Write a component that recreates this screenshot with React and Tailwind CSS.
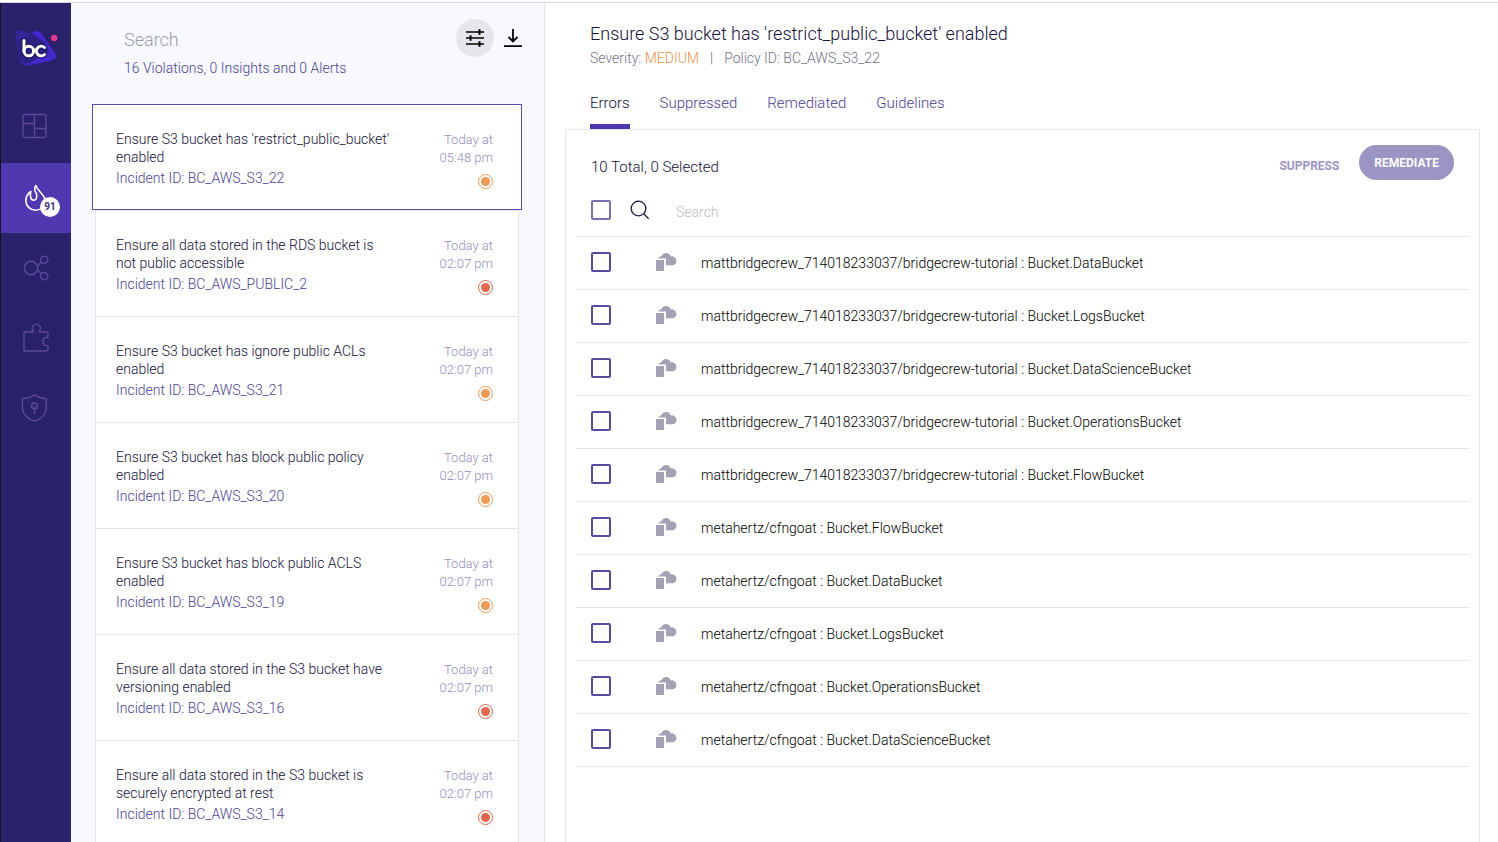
import React, { useState } from 'react'

const incidents = [
  { title: "Ensure S3 bucket has 'restrict_public_bucket' enabled", id: 'BC_AWS_S3_22', time: '05:48 pm', severity: 'medium' },
  { title: 'Ensure all data stored in the RDS bucket is not public accessible', id: 'BC_AWS_PUBLIC_2', time: '02:07 pm', severity: 'high' },
  { title: 'Ensure S3 bucket has ignore public ACLs enabled', id: 'BC_AWS_S3_21', time: '02:07 pm', severity: 'medium' },
  { title: 'Ensure S3 bucket has block public policy enabled', id: 'BC_AWS_S3_20', time: '02:07 pm', severity: 'medium' },
  { title: 'Ensure S3 bucket has block public ACLS enabled', id: 'BC_AWS_S3_19', time: '02:07 pm', severity: 'medium' },
  { title: 'Ensure all data stored in the S3 bucket have versioning enabled', id: 'BC_AWS_S3_16', time: '02:07 pm', severity: 'high' },
  { title: 'Ensure all data stored in the S3 bucket is securely encrypted at rest', id: 'BC_AWS_S3_14', time: '02:07 pm', severity: 'high' },
]

const resources = [
  'mattbridgecrew_714018233037/bridgecrew-tutorial : Bucket.DataBucket',
  'mattbridgecrew_714018233037/bridgecrew-tutorial : Bucket.LogsBucket',
  'mattbridgecrew_714018233037/bridgecrew-tutorial : Bucket.DataScienceBucket',
  'mattbridgecrew_714018233037/bridgecrew-tutorial : Bucket.OperationsBucket',
  'mattbridgecrew_714018233037/bridgecrew-tutorial : Bucket.FlowBucket',
  'metahertz/cfngoat : Bucket.FlowBucket',
  'metahertz/cfngoat : Bucket.DataBucket',
  'metahertz/cfngoat : Bucket.LogsBucket',
  'metahertz/cfngoat : Bucket.OperationsBucket',
  'metahertz/cfngoat : Bucket.DataScienceBucket',
]

const tabs = ['Errors', 'Suppressed', 'Remediated', 'Guidelines']

export default function App() {
  const [active, setActive] = useState('BC_AWS_S3_22')
  const [tab, setTab] = useState('Errors')
  const [selected, setSelected] = useState([])

  function toggle(name) {
    setSelected(selected.includes(name) ? selected.filter(n => n !== name) : [...selected, name])
  }

  function toggleAll() {
    setSelected(selected.length === resources.length ? [] : resources)
  }

  return (
    <div className="h-screen flex flex-col overflow-hidden bg-white font-['Roboto',sans-serif] font-light text-sm text-[#150f3a]">
      <div className="h-[3px] shrink-0 border-b border-[#d6d6df]"></div>
      <div className="flex flex-1 min-h-0">
        <Sidebar />

        <section className="w-[474px] shrink-0 flex flex-col bg-[#f8f9fe] border-r border-[#e6e6ee]">
          <div className="flex justify-between pl-[53px] pr-5 pt-4 h-[101px] shrink-0">
            <div>
              <input
                type="text"
                aria-label="Search incidents"
                placeholder="Search"
                className="block w-60 h-10 text-lg bg-transparent outline-none placeholder:text-[#9c9bb3]"
              />
              <p className="leading-[18px] text-[#4d3e96]">16 Violations, 0 Insights and 0 Alerts</p>
            </div>
            <div className="flex items-start gap-2">
              <button type="button" aria-label="Filters" className="w-[38px] h-[38px] rounded-full bg-[#e4e6eb] text-black flex items-center justify-center">
                <FilterIcon />
              </button>
              <button type="button" aria-label="Download" className="w-[22px] h-[38px] text-black flex items-center justify-center">
                <DownloadIcon />
              </button>
            </div>
          </div>
          <ul className="flex-1 min-h-0 overflow-hidden">
            {incidents.map(item => (
              <li key={item.id}>
                <Incident item={item} active={item.id === active} onClick={() => setActive(item.id)} />
              </li>
            ))}
          </ul>
        </section>

        <main className="flex-1 min-w-0 flex flex-col pl-5 pr-[18px] pt-[19px]">
          <header className="pl-[25px]">
            <h1 className="text-lg leading-6">Ensure S3 bucket has 'restrict_public_bucket' enabled</h1>
            <p className="flex leading-6 text-[#73718a]">
              <span>Severity: <span className="text-[#ee9148]">MEDIUM</span></span>
              <span className="px-[11px]">|</span>
              <span>Policy ID: BC_AWS_S3_22</span>
            </p>
            <nav className="flex gap-[30px] mt-5 text-[15px]">
              {tabs.map(name => (
                <button
                  key={name}
                  type="button"
                  onClick={() => setTab(name)}
                  className={`h-[39px] pb-1.5 border-b-[5px] ${name === tab ? 'border-[#4f36b0] text-[#150f3a]' : 'border-transparent text-[#4d3e96]'}`}
                >
                  {name}
                </button>
              ))}
            </nav>
          </header>

          <div className="flex-1 min-h-0 border border-b-0 border-[#e6e6ea] px-[10px] pt-[15px]">
            <div className="flex items-start justify-between h-11 px-[15px]">
              <h2 className="text-[15px] leading-[44px]">10 Total, {selected.length} Selected</h2>
              <div className="flex items-start gap-5 h-full text-xs font-bold">
                <button type="button" className="h-[41px] text-[#9c94c2]">SUPPRESS</button>
                <button type="button" className="h-[35px] px-[15px] rounded-full bg-[#9c94c2] text-white">REMEDIATE</button>
              </div>
            </div>
            <div className="flex items-center h-12 pl-[15px] pb-[5px] border-b border-[#e6e6ee]">
              <Checkbox label="Select all" checked={selected.length === resources.length} onChange={toggleAll} light />
              <label htmlFor="resource-search" className="ml-[19px]"><SearchIcon /></label>
              <input
                id="resource-search"
                type="text"
                placeholder="Search"
                className="ml-[26px] h-7 pt-1 flex-1 outline-none placeholder:text-[#bdbdc2]"
              />
            </div>
            <ul>
              {resources.map(name => (
                <li key={name} className="flex items-center h-[53px] pl-[15px] pb-0.5 border-b border-[#e6e6ee] text-black">
                  <Checkbox label={name} checked={selected.includes(name)} onChange={() => toggle(name)} />
                  <span className="ml-[45px] mr-6"><BucketIcon /></span>
                  <span className="truncate leading-6 pt-0.5">{name}</span>
                </li>
              ))}
            </ul>
          </div>
        </main>
      </div>
    </div>
  )
}

function Incident({ item, active, onClick }) {
  return (
    <button
      type="button"
      onClick={onClick}
      className={`flex justify-between items-start h-[106px] text-left bg-white pt-[25px] border ${active
        ? 'w-[430px] ml-[21px] pl-[23px] pr-7 border-[#584a9c]'
        : 'w-[424px] ml-6 pl-5 pr-[25px] border-b-0 border-[#e6e6ee]'}`}
    >
      <span className="block w-[280px]">
        <span className="block leading-[18px]">{item.title}</span>
        <span className="block mt-1 leading-4 text-[#4d3e96]">Incident ID: {item.id}</span>
      </span>
      <span className="flex flex-col items-end w-16 pt-px text-[13px] leading-[18px] text-right text-[#968dc0]">
        Today at<br />{item.time}
        <span className={`mt-[7px] w-[15px] h-[15px] rounded-full border flex items-center justify-center ${item.severity === 'high' ? 'border-[#e2674d]' : 'border-[#ec9a58]'}`}>
          <span className={`w-[9px] h-[9px] rounded-full ${item.severity === 'high' ? 'bg-[#e2674d]' : 'bg-[#ec9a58]'}`}></span>
        </span>
      </span>
    </button>
  )
}

function Checkbox({ label, checked, onChange, light }) {
  return (
    <input
      type="checkbox"
      aria-label={label}
      checked={checked}
      onChange={onChange}
      className={`appearance-none w-5 h-5 shrink-0 rounded-[2px] border-2 checked:bg-[#584a9c] ${light ? 'border-[#7b6fb0]' : 'border-[#584a9c]'}`}
    />
  )
}

function Sidebar() {
  return (
    <nav className="w-[71px] shrink-0 bg-[#2a216b] border-l border-[#15131c] text-[#5b4a9c]">
      <a href="#" aria-label="Home" className="flex justify-center h-[90px] pt-[26px]"><Logo /></a>
      <a href="#" aria-label="Dashboard" className="flex items-center justify-center h-[70px] pr-1 pb-1">
        <svg width="26" height="26" viewBox="0 0 26 26" fill="none" stroke="currentColor" strokeWidth="1.3">
          <rect x="2" y="1.500" width="23" height="23" rx="1.5" />
          <path d="M13.500 1.500v23M2 10.500h11.500M13.500 15.500H25" />
        </svg>
      </a>
      <a href="#" aria-label="Incidents" className="relative flex items-center h-[70px] pl-6 bg-[#4f38b0] text-white">
        <svg width="22" height="28" viewBox="0 0 22 28" fill="none" stroke="currentColor" strokeWidth="1.6" strokeLinejoin="round">
          <path d="M10.800 1.500C9 4.500 9.500 6.500 11 8.700c1.500 2.500 1 7.500-2.300 7.500-3.200 0-3.900-4.200-2.900-8.700C2.500 9.700.9 13 .9 16.700.9 22 5 26.200 10.500 26.200S20.200 22 20.200 17C20.200 10.500 13 8 10.800 1.500z" />
        </svg>
        <span className="absolute left-[39px] top-[34px] w-5 h-5 rounded-full bg-white text-[#3a2d80] text-[10px] leading-5 font-bold text-center">91</span>
      </a>
      <a href="#" aria-label="Integrations graph" className="flex items-center justify-center h-[70px]">
        <svg width="26" height="26" viewBox="0 0 26 26" fill="none" stroke="currentColor" strokeWidth="1.5">
          <circle cx="8" cy="13" r="6.700" />
          <circle cx="21.300" cy="4.800" r="3.500" />
          <circle cx="21.300" cy="21.200" r="3.500" />
          <path d="M18.600 7l-5 5M18.700 18.700l-4.700-4.500" />
        </svg>
      </a>
      <a href="#" aria-label="Plugins" className="flex items-center justify-center h-[70px]">
        <svg width="26" height="30" viewBox="0 0 26 30" fill="none" stroke="currentColor" strokeWidth="1.4" strokeLinejoin="round">
          <path d="M1.700 9h7.800c1.200 0 1.300-.8.800-1.400a4 4 0 1 1 6.200 0c-.5.6-.4 1.400.8 1.400h6.200c1.200 0 1.500.7 1.500 1.700v3c0 .9-.5 1.100-1.500.8-2-.6-3.500 1.500-3.500 4s1.500 4.500 3.500 4c1-.3 1.500.1 1.500.9v3c0 1.200-.5 1.600-1.500 1.600H2.500c-1 0-1.500-.4-1.500-1.400V10c0-.6.200-1 .7-1z" />
        </svg>
      </a>
      <a href="#" aria-label="Security" className="flex items-center justify-center h-[70px] pr-1">
        <svg width="26" height="28" viewBox="0 0 26 28" fill="none" stroke="currentColor" strokeWidth="1.4" strokeLinejoin="round">
          <path d="M13.500 .9C10.300 3.200 6 4.500 1.400 4.600v8.600C1.400 20 6.500 25.200 13.500 27.200c7-2 11.700-7.200 11.700-14V4.600C21 4.500 16.700 3.200 13.500 .9z" />
          <circle cx="13.500" cy="12" r="3" />
          <path d="M13.500 12v8" />
        </svg>
      </a>
    </nav>
  )
}

function Logo() {
  return (
    <svg width="44" height="40" viewBox="0 0 44 40">
      <path d="M5 1.500C2.500 1 1 3 1.400 5.500l4 26c.5 3.500 2.500 5.500 6 5.300L33 33 20 5z" fill="#33289a" />
      <path d="M18 4.500c2.500-4 6.500-3.500 9.500-.3L41.500 25c1.500 3 0 5.500-3 6.200l-26 5.600z" fill="#4328cc" />
      <path d="M18 4.500l13 9 4 9-20 12-9-2-3-20z" fill="#2c2284" />
      <circle cx="40.200" cy="9" r="3.200" fill="#e8378a" />
      <g fill="none" stroke="#1f1760" strokeWidth="5" strokeLinecap="round">
        <path d="M10 11.500v10.500" />
        <circle cx="14.800" cy="22" r="4.800" />
        <path d="M30.500 18.500a4.800 4.800 0 1 0 0 7" />
      </g>
      <g fill="none" stroke="#fff" strokeWidth="3" strokeLinecap="round">
        <path d="M10 11.500v10.500" />
        <circle cx="14.800" cy="22" r="4.800" />
        <path d="M30.500 18.500a4.800 4.800 0 1 0 0 7" />
      </g>
    </svg>
  )
}

function FilterIcon() {
  return (
    <svg width="20" height="20" viewBox="0 0 20 20" fill="none" stroke="currentColor" strokeWidth="1.600">
      <path d="M1 4h18M1 10h18M1 16h18" />
      <path d="M14.500 1.200v5.600M5.500 7.200v5.600M14.500 13.200v5.600" strokeWidth="2" />
    </svg>
  )
}

function DownloadIcon() {
  return (
    <svg width="20" height="20" viewBox="0 0 20 20" fill="none" stroke="currentColor" strokeWidth="1.800">
      <path d="M10 1v12M5.500 9l4.500 4.500L14.500 9M1 18.200h18" />
    </svg>
  )
}

function SearchIcon() {
  return (
    <svg width="20" height="20" viewBox="0 0 20 20" fill="none" stroke="#1c1642" strokeWidth="1.300">
      <circle cx="8.500" cy="8.500" r="7.300" />
      <path d="M13.700 13.700l5 5" />
    </svg>
  )
}

function BucketIcon() {
  return (
    <svg width="21" height="18" viewBox="0 0 21 18" fill="#a5a1b5">
      <rect x="0" y="7" width="8" height="11" />
      <path d="M2 5.500C3 4.200 4 3.500 5.500 3 6.500 1 8 0 10 0c2.300 0 4 1.200 4.600 3.300 3-.3 5.900 1.700 5.900 4.700 0 2.600-2 4.200-4.300 4.200H10V5.500z" />
    </svg>
  )
}
